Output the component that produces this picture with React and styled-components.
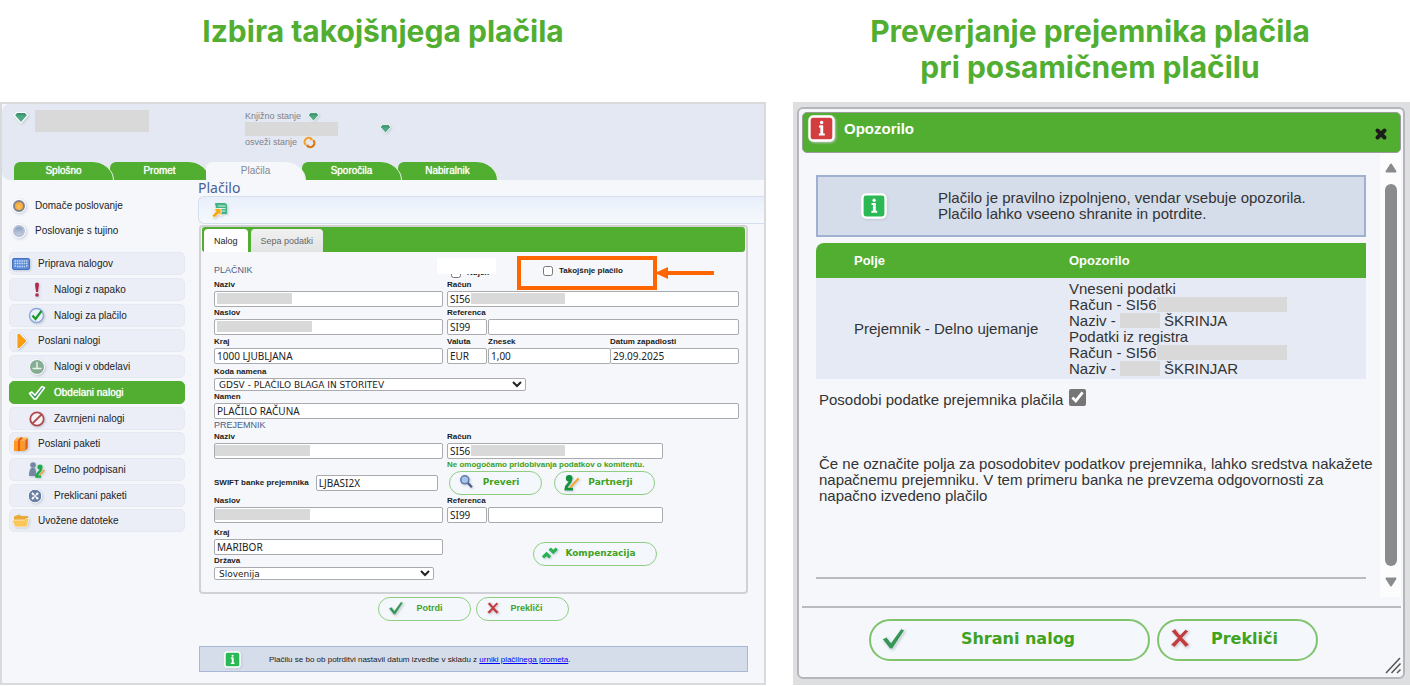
import React, { useId } from "react";
import styled, { createGlobalStyle, css } from "styled-components";

const GlobalStyle = createGlobalStyle`
  *, *::before, *::after {
    box-sizing: border-box;
  }

  body {
    margin: 0;
    background: #fff;
    color: #222;
    font-family: "Liberation Sans", Arial, sans-serif;
    font-size: 10px;
  }

  button, input, select {
    font-family: inherit;
    margin: 0;
  }
`;

const GREEN = "#52ae30";

/* ---------- page ---------- */

const Page = styled.div`
  display: grid;
  grid-template-columns: minmax(0, 766fr) minmax(0, 617fr);
  column-gap: 27px;
  padding-top: 13px;
`;

const Column = styled.section`
  display: flex;
  flex-direction: column;
`;

const Heading = styled.h2`
  min-height: 89px;
  margin: 0;
  padding-right: ${(props) => (props.$inset ? "23px" : "0")};
  color: ${GREEN};
  font-family: Inter, sans-serif;
  font-size: 30px;
  font-weight: 700;
  line-height: 36px;
  text-align: center;
`;

/* ---------- bank window ---------- */

const Bank = styled.div`
  flex: 1;
  border: 2px solid #d9dadc;
  background: #f5f7fb;
`;

const Header = styled.header`
  display: flex;
  flex-direction: column;
  justify-content: space-between;
  min-height: 76px;
  border-radius: 8px 0 0 8px;
  background: #e4e8f2;
`;

const AccountRow = styled.div`
  display: flex;
  align-items: flex-start;
  padding: 6px 12px 0;
`;

const AccountName = styled.div`
  display: flex;
  gap: 7px;
  width: 231px;
`;

const Balance = styled.div`
  width: 135px;
  color: #7c818c;
  font-size: 9px;
`;

const BalanceLine = styled.div`
  display: flex;
  align-items: center;
  gap: 7px;
  height: 12px;
`;

const AccountSwitch = styled.div`
  padding-top: 13px;
`;

const Mask = styled.span`
  display: inline-block;
  width: ${(props) => props.$w}px;
  height: ${(props) => props.$h}px;
  background: #d9d9d9;
  vertical-align: top;
`;

const Tabs = styled.nav`
  display: flex;
  padding-left: 12px;
`;

const Tab = styled.a`
  position: relative;
  z-index: ${(props) => props.$level};
  width: 100px;
  margin-right: -4px;
  border-right: 1px solid #e9f3ea;
  border-radius: 6px 22px 0 0 / 6px 18px 0 0;
  background: ${(props) => (props.$active ? "#f5f7fb" : GREEN)};
  color: ${(props) => (props.$active ? "#82868f" : "#fff")};
  font-size: 10px;
  line-height: 18px;
  text-align: center;
  text-decoration: none;
  text-shadow: ${(props) => (props.$active ? "none" : "0 0 1px #fff")};
`;

const Body = styled.div`
  display: flex;
`;

const Sidebar = styled.aside`
  flex: 0 0 183px;
  padding: 13px 0 0 7px;
`;

const Choice = styled.label`
  display: flex;
  align-items: center;
  gap: 10px;
  height: 25px;
  padding-left: 4px;
`;

const Radio = styled.input`
  appearance: none;
  width: 12px;
  height: 12px;
  border: 2px solid #b3bfd6;
  border-radius: 50%;
  background: linear-gradient(#8f9fc0, #c3cde0);
  box-shadow: 0 0 0 1px #fff, 1px 1px 3px 1px #c6ccd8;

  &:checked {
    border-color: #7d8594;
    background: radial-gradient(circle at 50% 60%, #ffc35a, #f29a2a);
  }
`;

const Menu = styled.ul`
  display: flex;
  flex-direction: column;
  gap: 2px;
  margin: 9px 0 0;
  padding: 0;
  list-style: none;
`;

const SubMenu = styled.ul`
  display: flex;
  flex-direction: column;
  gap: 3px;
  margin: 3px 0 0;
  padding: 0;
  list-style: none;
`;

const MenuLink = styled.a`
  display: flex;
  align-items: center;
  gap: 8px;
  height: 23px;
  padding-left: ${(props) => (props.$sub ? "18px" : "2px")};
  border: 1px solid ${(props) => (props.$active ? GREEN : "#e5e9f2")};
  border-radius: 5px;
  background: ${(props) => (props.$active ? GREEN : "#ebeef6")};
  color: ${(props) => (props.$active ? "#fff" : "#222")};
  text-decoration: none;
  text-shadow: ${(props) => (props.$active ? "0 0 1px #fff" : "none")};
`;

const Icon = styled.svg.attrs({ "aria-hidden": true })`
  flex: none;
  display: block;
  width: ${(props) => props.$size || 18}px;
  height: ${(props) => props.$size || 18}px;
  overflow: visible;
  filter: ${(props) => (props.$flat ? "none" : "drop-shadow(1px 1px 1px #c3c9d4)")};
`;

const Main = styled.main`
  flex: 1;
  min-width: 0;
  padding-left: 13px;
`;

const Title = styled.h1`
  margin: 0;
  color: #4a5f96;
  font-family: "Noto Sans", Verdana, sans-serif;
  font-size: 14px;
  font-weight: 400;
  line-height: 16px;
`;

const Toolbar = styled.div`
  display: flex;
  align-items: center;
  height: 28px;
  padding-left: 12px;
  border: 1px solid #d6dfee;
  border-right: 0;
  border-radius: 6px 0 0 6px;
  background: linear-gradient(#e9effa, #f6f9fd);
`;

const FormPanel = styled.form`
  margin: 1px 16px 0 1px;
  border: 2px solid #cfd1d5;
  border-radius: 4px;
`;

const FormTabs = styled.div`
  display: flex;
  gap: 3px;
  height: 25px;
  margin: 0 1px;
  padding: 2px 2px 0;
  border-radius: 3px;
  background: ${GREEN};
`;

const FormTab = styled.button`
  padding: 0 10px;
  border: 0;
  border-radius: 4px 4px 0 0;
  background: ${(props) => (props.$active ? "#fff" : "linear-gradient(#f1f1f1, #e2e3e4)")};
  color: ${(props) => (props.$active ? "#222" : "#666")};
  font-size: 9px;
`;

const Fields = styled.div`
  padding: 0 7px 12px 13px;
`;

const Legend = styled.div`
  color: #4b5c86;
  font-size: 9px;
  line-height: 12px;
`;

const OptionsRow = styled.div`
  display: grid;
  grid-template-columns: minmax(0, 229fr) minmax(0, 292fr);
  column-gap: 4px;
  align-items: center;
  height: 27px;
  padding-top: 8px;
`;

const Options = styled.div`
  position: relative;
  align-self: end;
  display: flex;
  align-items: center;
  height: 12px;
`;

const labelText = css`
  color: #1c1c1c;
  font-size: 8px;
  font-weight: 700;
  line-height: 12px;
  white-space: nowrap;
`;

const CheckLabel = styled.label`
  ${labelText}
  display: flex;
  align-items: center;
  gap: 6px;
  padding-left: 4px;

  input {
    width: 10px;
    height: 10px;
  }
`;

const Patch = styled.span`
  position: absolute;
  left: -10px;
  top: -9px;
  width: 59px;
  height: 16px;
  background: #fff;
`;

const Highlight = styled.div`
  position: absolute;
  left: 70px;
  top: -11px;
  display: flex;
  align-items: flex-start;
  width: 140px;
  height: 34px;
  padding: 5px 18px;
  border: 4px solid #f60;
`;

const Arrow = styled.svg`
  position: absolute;
  left: 208px;
  top: 0;
`;

const Row = styled.div`
  display: grid;
  grid-template-columns: minmax(0, 229fr) minmax(0, 292fr);
  column-gap: 4px;
  margin-top: ${(props) => props.$top || 0}px;
`;

const Parts = styled.div`
  display: flex;
  gap: 1px;
  padding-right: ${(props) => (props.$short ? "76px" : "0")};
`;

const FieldBox = styled.div`
  flex: ${(props) => (props.$w ? `0 0 ${props.$w}px` : "1")};
  min-width: 0;
  margin-left: ${(props) => (props.$joined ? "-2px" : "0")};
`;

const Label = styled.label`
  ${labelText}
  display: block;
`;

const Control = styled.div`
  position: relative;
`;

const box = css`
  display: block;
  width: 100%;
  border: 1px solid #a9abaf;
  border-radius: 2px;
  background: #fff;
  color: #222;
`;

const Input = styled.input`
  ${box}
  height: 16px;
  padding: 0 2px;
  font-family: "Noto Sans", Verdana, sans-serif;
  font-size: 10px;
`;

const Select = styled.select`
  ${box}
  width: ${(props) => props.$w}px;
  height: 13px;
  padding: 0;
  font-family: "DejaVu Sans", Verdana, sans-serif;
  font-size: 9px;
`;

const InputMask = styled(Mask)`
  position: absolute;
  top: 2px;
  left: ${(props) => props.$x}px;
`;

const SwiftRow = styled.div`
  display: flex;
  align-items: center;
  gap: 7px;
  padding: 4px 5px 4px 0;

  > div {
    flex: 1;
  }
`;

const Notice = styled.div`
  color: #3a9f1d;
  font-size: 8px;
  font-weight: 700;
  line-height: 12px;
`;

const ButtonPair = styled.div`
  display: flex;
  gap: 12px;
  padding-left: 2px;
`;

const Pill = styled.button`
  display: flex;
  align-items: center;
  width: ${(props) => props.$w}px;
  height: 24px;
  padding: 0 14px 2px 9px;
  border: 1px solid #8fcd82;
  border-radius: 12px;
  background: #f4f7fc;
  color: #3fa31f;
  font-family: ${(props) => (props.$plain ? "inherit" : '"DejaVu Sans", Verdana, sans-serif')};
  font-size: 9px;
  font-weight: 700;

  span {
    flex: 1;
    text-align: center;
  }
`;

const PillSlot = styled.div`
  align-self: center;
  padding-left: 86px;
`;

const Actions = styled.div`
  display: flex;
  justify-content: center;
  gap: 5px;
  margin: 3px 16px 0 0;
`;

const InfoBar = styled.div`
  display: flex;
  align-items: center;
  gap: 28px;
  height: 26px;
  margin: 25px 16px 11px 1px;
  padding-left: 24px;
  border: 1px solid #a9b8d6;
  background: #d5dcea;
  font-size: 8px;

  a {
    color: #00f;
  }
`;

/* ---------- warning dialog ---------- */

const Backdrop = styled.div`
  flex: 1;
  display: flex;
  padding: 5px 5px 6px 4px;
  background: #dedfe1;
`;

const Dialog = styled.div`
  flex: 1;
  display: flex;
  flex-direction: column;
  padding: 3px 2px 3px 3px;
  border: 2px solid #b4b6ba;
  border-radius: 6px;
  background: #f5f7fb;
`;

const DialogTitle = styled.div`
  display: flex;
  align-items: center;
  gap: 9px;
  height: 41px;
  padding: 0 12px 8px 5px;
  border: 1px solid #999f98;
  border-radius: 5px;
  background: ${GREEN};
  color: #fff;

  h3 {
    flex: 1;
    margin: 0;
    font-size: 15px;
  }
`;

const CloseButton = styled.button`
  width: 14px;
  height: 14px;
  margin-top: 10px;
  padding: 0;
  border: 0;
  background: none;
`;

const DialogMain = styled.div`
  flex: 1;
  display: flex;
  border-bottom: 2px solid #babbbe;
`;

const DialogBody = styled.div`
  flex: 1;
  display: flex;
  flex-direction: column;
  min-width: 0;
  margin: 22px 14px 27px;
  border-bottom: 2px solid #babbbe;
  color: #333;
  font-size: 15px;
  line-height: 16px;
`;

const Banner = styled.div`
  display: flex;
  align-items: center;
  gap: 51px;
  height: 62px;
  padding-left: 43px;
  border: 2px solid #9fb0d0;
  background: #d5dcea;
`;

const WarningTable = styled.table`
  width: 100%;
  margin-top: 6px;
  border-collapse: separate;
  border-spacing: 0;

  th, td {
    text-align: left;
  }

  th {
    height: 35px;
    padding: 0 0 0 38px;
    background: ${GREEN};
    color: #fff;
    font-size: 13px;
  }

  th:first-child {
    border-radius: 8px 0 0 0;
  }

  td {
    padding: 3px 0 2px 38px;
    background: #e6eaf4;
  }

  th + th, td + td {
    width: 54%;
    padding-left: 0;
  }
`;

const UpdateRow = styled.label`
  display: flex;
  align-items: center;
  gap: 6px;
  padding: 10px 3px 0;

  input {
    width: 17px;
    height: 17px;
    margin-bottom: 4px;
    accent-color: #767676;
  }
`;

/* runs up to the scrollbar */
const Note = styled.p`
  margin: 46px -12px 0 3px;
`;

const Scrollbar = styled.div`
  display: flex;
  flex-direction: column;
  align-items: center;
  gap: 11px;
  width: 21px;
  margin-bottom: 9px;
  padding: 10px 0;
  background: #fcfcfd;
`;

const Thumb = styled.div`
  flex: 1;
  width: 12px;
  border-radius: 6px;
  background: #8a8b8d;
`;

const DialogFooter = styled.div`
  position: relative;
  display: flex;
  justify-content: center;
  gap: 7px;
  padding: 11px 16px 13px 0;
`;

const BigPill = styled(Pill)`
  height: 42px;
  padding: 0 18px 4px 10px;
  border: 2px solid #7fc46d;
  border-radius: 21px;
  font-size: 16px;
`;

const Grip = styled.svg`
  position: absolute;
  right: -1px;
  bottom: 0;
`;

/* ---------- icons ---------- */

const Gem = ({ size = 12 }) => (
  <Icon viewBox="0 0 12 12" $size={size}>
    <path d="M2.500 2h7l2.200 2.600L6 11 .3 4.600z" fill="#4fa985" stroke="#fff" strokeWidth="1" />
    <path d="M2.800 2.500h6.400l1.600 2H1.200z" fill="#3f9573" />
  </Icon>
);

const Refresh = () => (
  <Icon viewBox="0 0 12 12" $size={11} $flat>
    <path d="M2 8.500A4.300 4.300 0 018 2.200" fill="none" stroke="#f7a027" strokeWidth="2.400" />
    <path d="M10 3.500A4.300 4.300 0 014 9.800" fill="none" stroke="#dc7514" strokeWidth="2.400" />
    <path d="M7.500 0l2.800 2.600L7 4z" fill="#f7a027" />
    <path d="M4.500 12L1.700 9.400 5 8z" fill="#dc7514" />
  </Icon>
);

const Keyboard = () => (
  <Icon viewBox="0 0 18 18">
    <rect x=".5" y="3.500" width="17" height="11" rx="1.500" fill="#5b8bd6" stroke="#4474bf" />
    <path d="M2.500 6h13M2.500 8.500h13M2.500 11h1.600M5 11.500h8M14 11h1.600" stroke="#c5dafa" strokeWidth="1.500" strokeDasharray="1.600 .7" />
  </Icon>
);

const Exclamation = () => (
  <Icon viewBox="0 0 18 18">
    <path d="M7 3.500a2 2 0 014 0L9.900 11H8.100z" fill="#b0284c" />
    <circle cx="9" cy="14" r="1.800" fill="#b0284c" />
  </Icon>
);

const CheckCircle = () => (
  <Icon viewBox="0 0 18 18">
    <circle cx="8.500" cy="8.500" r="7" fill="#e9f0fb" stroke="#8aa8dc" strokeWidth="1.400" />
    <path d="M4.500 8.500l3 3.500 6-8" fill="none" stroke="#159a26" strokeWidth="2.200" />
  </Icon>
);

const PlayArrow = () => (
  <Icon viewBox="0 0 18 18">
    <path d="M5 1.500h2.500L15 9l-7.500 7.500H5z" fill="#f99d15" stroke="#fff" strokeWidth=".8" />
  </Icon>
);

const ClockDown = () => (
  <Icon viewBox="0 0 18 18">
    <circle cx="9" cy="9" r="7.500" fill="#86ad93" stroke="#fff" />
    <path d="M9 4v7M4.500 10.500h9" stroke="#e9f3ec" strokeWidth="1.500" />
  </Icon>
);

const CheckOutline = () => (
  <Icon viewBox="0 0 18 18" $flat>
    <path d="M1.500 9.500l2.300-1.500 3.200 3.300L14 2.500l2.500 1.200-8.500 11.300H6.200z" fill="#3a9a5c" stroke="#fff" strokeWidth="1.600" strokeLinejoin="round" />
  </Icon>
);

const Forbidden = () => (
  <Icon viewBox="0 0 18 18">
    <circle cx="9" cy="9" r="6.700" fill="#f3f3f5" stroke="#b24a4c" strokeWidth="1.800" />
    <path d="M13.500 4.500l-9 9" stroke="#b24a4c" strokeWidth="1.800" />
  </Icon>
);

const Parcel = () => (
  <Icon viewBox="0 0 18 18">
    <path d="M2 5.500h10.500V16H2z" fill="#fb9a1c" />
    <path d="M12.500 5.500L16 3v10l-3.500 3z" fill="#f0860f" />
    <path d="M2 5.500L5 2.500h11l-3.500 3z" fill="#ffb84d" />
    <path d="M7 16V5.500l3-3" stroke="#f0581c" strokeWidth="2" fill="none" />
    <path d="M14.300 14.500v-10" stroke="#e8501a" strokeWidth="1" />
  </Icon>
);

const People = () => (
  <Icon viewBox="0 0 18 18">
    <circle cx="5" cy="4" r="2.800" fill="#7387a3" />
    <path d="M1 15c0-5 1-8.500 4-8.500S8 10 8 15z" fill="#7387a3" />
    <circle cx="12" cy="6" r="2.600" fill="#1faa4b" />
    <path d="M13 8c0 3-4 3-4.500 7.500H13" fill="none" stroke="#1faa4b" strokeWidth="2.400" />
    <path d="M11.500 14.500l5-5.500" stroke="#f2a634" strokeWidth="1.600" />
  </Icon>
);

const CancelledRound = () => (
  <Icon viewBox="0 0 18 18">
    <circle cx="7" cy="9" r="6.800" fill="#687fa6" stroke="#fff" />
    <path d="M4 6l2 2M10 6L8 8M4 12l2-2M10 12l-2-2" stroke="#fff" strokeWidth="2" />
    <circle cx="7" cy="9" r="1" fill="#fff" />
  </Icon>
);

const Folder = () => (
  <Icon viewBox="0 0 18 18">
    <path d="M2 4.500L7 2.500l2 1.500h7V13H2z" fill="#e9a93a" />
    <path d="M0 8h12.500l2-1.500h2.500L15 15H3z" fill="#fcc75a" stroke="#fff" strokeWidth=".6" />
  </Icon>
);

const Transfer = () => (
  <Icon viewBox="0 0 18 18">
    <path d="M4 2h10l2 1.500V13H6z" fill="#41b586" />
    <path d="M7 5h7.500M8 7.500h6.500M9 10h5.500" stroke="#d8f2e6" strokeWidth="1.200" />
    <path d="M2.500 7.500H10V15l-2.300-2.300L3.500 17 1 14.500l4-4.200z" fill="#f7a818" stroke="#fff" strokeWidth=".8" />
  </Icon>
);

const Info = ({ size, color }) => (
  <Icon viewBox="0 0 18 18" $size={size}>
    <rect x="1" y="1" width="16" height="16" rx="2.500" fill={color} stroke="#fff" strokeWidth="1.600" />
    <path d="M7.300 7.600h1.900v5M7.200 13h4" fill="none" stroke="#fff" strokeWidth="1.300" />
    <path d="M9.200 7v6" stroke="#fff" strokeWidth="1.900" />
    <circle cx="9.100" cy="5" r="1.150" fill="#fff" />
  </Icon>
);

const Magnifier = () => (
  <Icon viewBox="0 0 18 18" $size={16}>
    <path d="M9.500 9.500l5 5.500" stroke="#4a5f86" strokeWidth="2.600" />
    <circle cx="6.500" cy="6.500" r="4.500" fill="#a6c4ee" stroke="#647ea8" strokeWidth="1.800" />
  </Icon>
);

const Partner = () => (
  <Icon viewBox="0 0 18 18" $size={17}>
    <circle cx="5.500" cy="4.500" r="3.500" fill="#13923e" />
    <path d="M7 6c.5 5-5 4-5 10h7.500" fill="none" stroke="#13923e" strokeWidth="3" />
    <path d="M6.500 14.500L15.500 4.500" stroke="#f6a428" strokeWidth="2" />
  </Icon>
);

const Compensate = () => (
  <Icon viewBox="0 0 18 18" $size={16}>
    <path d="M0 14l4-4 4 4" fill="none" stroke="#28b253" strokeWidth="3.600" />
    <path d="M7.500 4l4 4 4-4" fill="none" stroke="#28b253" strokeWidth="3.600" />
  </Icon>
);

const Tick = ({ size }) => (
  <Icon viewBox="0 0 18 18" $size={size}>
    <path d="M1 9.500l3-1.500 3.200 4L14.500 2l2.500 1-8.800 13.500H6.500z" fill="#379558" stroke="#fff" strokeWidth=".5" />
  </Icon>
);

const Cross = ({ size }) => (
  <Icon viewBox="0 0 18 18" $size={size}>
    <path d="M2 3.500L5 1.500l4 5L13.500 2l2.500 1.500-5 5.300 5.500 5.700-3 2L9 11.500l-4.500 5-3-2L7 9z" fill="#c03c3e" stroke="#fff" strokeWidth=".4" />
  </Icon>
);

/* ---------- data ---------- */

const tabs = ["Splošno", "Promet", "Plačila", "Sporočila", "Nabiralnik"];
const activeTab = "Plačila";

const menu = [
  {
    text: "Priprava nalogov",
    icon: <Keyboard />,
    items: [
      { text: "Nalogi z napako", icon: <Exclamation /> },
      { text: "Nalogi za plačilo", icon: <CheckCircle /> },
    ],
  },
  {
    text: "Poslani nalogi",
    icon: <PlayArrow />,
    items: [
      { text: "Nalogi v obdelavi", icon: <ClockDown /> },
      { text: "Obdelani nalogi", icon: <CheckOutline />, active: true },
      { text: "Zavrnjeni nalogi", icon: <Forbidden /> },
    ],
  },
  {
    text: "Poslani paketi",
    icon: <Parcel />,
    items: [
      { text: "Delno podpisani", icon: <People /> },
      { text: "Preklicani paketi", icon: <CancelledRound /> },
    ],
  },
  { text: "Uvožene datoteke", icon: <Folder /> },
];

const Field = ({ label, name, value = "", width, joined, mask }) => {
  const id = useId();
  return (
    <FieldBox $w={width} $joined={joined}>
      {/* the second half of a split field has no caption of its own */}
      {label ? <Label htmlFor={id}>{label}</Label> : <Label as="div">&nbsp;</Label>}
      <Control>
        <Input id={id} aria-label={label ? undefined : name} defaultValue={value} />
        {mask && <InputMask $x={mask[0]} $w={mask[1]} $h={11} />}
      </Control>
    </FieldBox>
  );
};

const SelectField = ({ label, value, width }) => {
  const id = useId();
  return (
    <FieldBox>
      <Label htmlFor={id}>{label}</Label>
      <Select id={id} $w={width} defaultValue={value}>
        <option>{value}</option>
      </Select>
    </FieldBox>
  );
};

const PaymentForm = () => (
  <FormPanel onSubmit={(e) => e.preventDefault()}>
    <FormTabs>
      <FormTab type="button" $active>Nalog</FormTab>
      <FormTab type="button">Sepa podatki</FormTab>
    </FormTabs>
    <Fields>
      <OptionsRow>
        <Legend>PLAČNIK</Legend>
        <Options>
          <CheckLabel>
            <input type="checkbox" />
            Nujen
          </CheckLabel>
          <Patch />
          <Highlight>
            <CheckLabel>
              <input type="checkbox" />
              Takojšnje plačilo
            </CheckLabel>
          </Highlight>
          <Arrow width="60" height="12" viewBox="0 0 60 12" aria-hidden="true">
            <path d="M0 6l13-6v4h46v4H13v4z" fill="#f60" />
          </Arrow>
        </Options>
      </OptionsRow>
      <Row>
        <Field label="Naziv" mask={[3, 75]} />
        <Field label="Račun" value="SI56" mask={[24, 94]} />
      </Row>
      <Row>
        <Field label="Naslov" mask={[3, 95]} />
        <Parts>
          <Field label="Referenca" value="SI99" width={40} />
          <Field name="Referenca, nadaljevanje" />
        </Parts>
      </Row>
      <Row $top={1}>
        <Field label="Kraj" value="1000 LJUBLJANA" />
        <Parts>
          <Field label="Valuta" value="EUR" width={40} />
          <Field label="Znesek" value="1,00" />
          <Field label="Datum zapadlosti" value="29.09.2025" width={129} joined />
        </Parts>
      </Row>
      <Row $top={2}>
        <SelectField label="Koda namena" value="GDSV - PLAČILO BLAGA IN STORITEV" width={312} />
      </Row>
      <Field label="Namen" value="PLAČILO RAČUNA" />
      <Legend>PREJEMNIK</Legend>
      <Row>
        <Field label="Naziv" mask={[1, 95]} />
        <Parts $short>
          <Field label="Račun" value="SI56" mask={[24, 94]} />
        </Parts>
      </Row>
      <Row>
        <span />
        <Notice>Ne omogočamo pridobivanja podatkov o komitentu.</Notice>
      </Row>
      <Row>
        <SwiftRow>
          <Label htmlFor="swift">SWIFT banke prejemnika</Label>
          <div>
            <Input id="swift" defaultValue="LJBASI2X" />
          </div>
        </SwiftRow>
        <ButtonPair>
          <Pill type="button" $w={93}>
            <Magnifier />
            <span>Preveri</span>
          </Pill>
          <Pill type="button" $w={101}>
            <Partner />
            <span>Partnerji</span>
          </Pill>
        </ButtonPair>
      </Row>
      <Row>
        <Field label="Naslov" mask={[1, 95]} />
        <Parts $short>
          <Field label="Referenca" value="SI99" width={40} />
          <Field name="Referenca, nadaljevanje" />
        </Parts>
      </Row>
      <Row $top={4}>
        <div>
          <Field label="Kraj" value="MARIBOR" />
          <SelectField label="Država" value="Slovenija" width={220} />
        </div>
        <PillSlot>
          <Pill type="button" $w={124}>
            <Compensate />
            <span>Kompenzacija</span>
          </Pill>
        </PillSlot>
      </Row>
    </Fields>
  </FormPanel>
);

const BankWindow = () => (
  <Bank>
    <Header>
      <AccountRow>
        <AccountName>
          <Gem size={14} />
          <Mask $w={114} $h={22} />
        </AccountName>
        <Balance>
          <BalanceLine>
            Knjižno stanje <Gem size={11} />
          </BalanceLine>
          <Mask $w={93} $h={14} />
          <BalanceLine>
            osveži stanje <Refresh />
          </BalanceLine>
        </Balance>
        <AccountSwitch>
          <Gem size={11} />
        </AccountSwitch>
      </AccountRow>
      <Tabs>
        {tabs.map((tab, i) => (
          <Tab
            key={tab}
            href="#"
            $active={tab === activeTab}
            $level={tab === activeTab ? tabs.length + 1 : tabs.length - i}
          >
            {tab}
          </Tab>
        ))}
      </Tabs>
    </Header>
    <Body>
      <Sidebar>
        <Choice>
          <Radio type="radio" name="scope" defaultChecked />
          Domače poslovanje
        </Choice>
        <Choice>
          <Radio type="radio" name="scope" />
          Poslovanje s tujino
        </Choice>
        <Menu>
          {menu.map((group) => (
            <li key={group.text}>
              <MenuLink href="#">
                {group.icon}
                {group.text}
              </MenuLink>
              {group.items && (
                <SubMenu>
                  {group.items.map((item) => (
                    <li key={item.text}>
                      <MenuLink href="#" $sub $active={item.active}>
                        {item.icon}
                        {item.text}
                      </MenuLink>
                    </li>
                  ))}
                </SubMenu>
              )}
            </li>
          ))}
        </Menu>
      </Sidebar>
      <Main>
        <Title>Plačilo</Title>
        <Toolbar>
          <Transfer />
        </Toolbar>
        <PaymentForm />
        <Actions>
          <Pill type="button" $w={93} $plain>
            <Tick size={16} />
            <span>Potrdi</span>
          </Pill>
          <Pill type="button" $w={93} $plain>
            <Cross size={14} />
            <span>Prekliči</span>
          </Pill>
        </Actions>
        <InfoBar>
          <Info size={17} color="#2bb956" />
          <span>
            Plačilu se bo ob potrditvi nastavil datum izvedbe v skladu z{" "}
            <a href="#">urniki plačilnega prometa</a>.
          </span>
        </InfoBar>
      </Main>
    </Body>
  </Bank>
);

const WarningDialog = () => (
  <Backdrop>
    <Dialog role="dialog" aria-labelledby="warning-title">
      <DialogTitle>
        <Info size={27} color="#d43d40" />
        <h3 id="warning-title">Opozorilo</h3>
        <CloseButton type="button" aria-label="Zapri">
          <svg width="14" height="14" viewBox="0 0 14 14">
            <path d="M3.500 3.500l7 7M10.500 3.500l-7 7" stroke="#1d1d1b" strokeWidth="4" strokeLinecap="round" />
          </svg>
        </CloseButton>
      </DialogTitle>
      <DialogMain>
        <DialogBody>
          <Banner>
            <Info size={26} color="#2bb956" />
            <div>
              Plačilo je pravilno izpolnjeno, vendar vsebuje opozorila.
              <br />
              Plačilo lahko vseeno shranite in potrdite.
            </div>
          </Banner>
          <WarningTable>
            <thead>
              <tr>
                <th>Polje</th>
                <th>Opozorilo</th>
              </tr>
            </thead>
            <tbody>
              <tr>
                <td>Prejemnik - Delno ujemanje</td>
                <td>
                  Vneseni podatki
                  <br />
                  Račun - SI56
                  <Mask $w={130} $h={15} />
                  <br />
                  Naziv - <Mask $w={40} $h={15} /> ŠKRINJA
                  <br />
                  Podatki iz registra
                  <br />
                  Račun - SI56
                  <Mask $w={130} $h={15} />
                  <br />
                  Naziv - <Mask $w={40} $h={15} /> ŠKRINJAR
                </td>
              </tr>
            </tbody>
          </WarningTable>
          <UpdateRow>
            Posodobi podatke prejemnika plačila
            <input type="checkbox" defaultChecked />
          </UpdateRow>
          <Note>
            Če ne označite polja za posodobitev podatkov prejemnika, lahko sredstva nakažete
            napačnemu prejemniku. V tem primeru banka ne prevzema odgovornosti za
            <br />
            napačno izvedeno plačilo
          </Note>
        </DialogBody>
        <Scrollbar aria-hidden="true">
          <svg width="12" height="10" viewBox="0 0 12 10">
            <path d="M6 1.500l4.500 7h-9z" fill="#8a8b8d" stroke="#8a8b8d" strokeWidth="2" strokeLinejoin="round" />
          </svg>
          <Thumb />
          <svg width="12" height="10" viewBox="0 0 12 10">
            <path d="M6 8.500l4.500-7h-9z" fill="#8a8b8d" stroke="#8a8b8d" strokeWidth="2" strokeLinejoin="round" />
          </svg>
        </Scrollbar>
      </DialogMain>
      <DialogFooter>
        <BigPill type="button" $w={281}>
          <Tick size={25} />
          <span>Shrani nalog</span>
        </BigPill>
        <BigPill type="button" $w={161}>
          <Cross size={22} />
          <span>Prekliči</span>
        </BigPill>
        <Grip width="17" height="17" viewBox="0 0 17 17" aria-hidden="true">
          <path d="M1 16L15 1M6.500 16L15.500 6.500M12 16l3.500-3.500" stroke="#555" strokeWidth="1.500" />
        </Grip>
      </DialogFooter>
    </Dialog>
  </Backdrop>
);

const App = () => (
  <>
    <GlobalStyle />
    <Page>
      <Column>
        <Heading>Izbira takojšnjega plačila</Heading>
        <BankWindow />
      </Column>
      <Column>
        <Heading $inset>
          Preverjanje prejemnika plačila
          <br />
          pri posamičnem plačilu
        </Heading>
        <WarningDialog />
      </Column>
    </Page>
  </>
);

export default App;
